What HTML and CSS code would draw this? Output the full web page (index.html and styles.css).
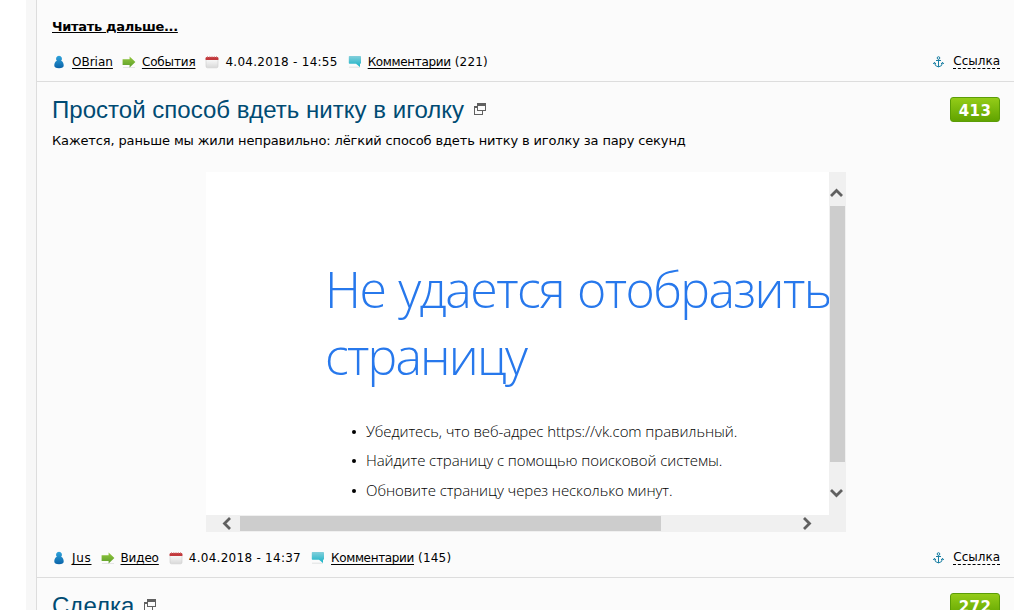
FILE: index.html
```html
<!DOCTYPE html>
<html lang="ru">

<head>
  <meta charset="UTF-8">
  <meta name="viewport" content="width=device-width, initial-scale=1.0">
  <title>Простой способ вдеть нитку в иголку</title>
  <link rel="stylesheet" href="styles.css">
</head>

<body>
  <!-- shared icons -->
  <svg class="sprite" width="0" height="0">
    <defs>
      <linearGradient id="gblue" x1="0" y1="0" x2="0" y2="1">
        <stop offset="0" stop-color="#2fa4dc" />
        <stop offset="1" stop-color="#0b63a8" />
      </linearGradient>
      <linearGradient id="ggreen" x1="0" y1="0" x2="0" y2="1">
        <stop offset="0" stop-color="#93c83d" />
        <stop offset="1" stop-color="#5c9e2a" />
      </linearGradient>
      <linearGradient id="gcyan" x1="0" y1="0" x2="0" y2="1">
        <stop offset="0" stop-color="#84cfdb" />
        <stop offset="1" stop-color="#14b2c6" />
      </linearGradient>
      <linearGradient id="ggrey" x1="0" y1="0" x2="0" y2="1">
        <stop offset="0" stop-color="#ffffff" />
        <stop offset="1" stop-color="#d9d9d9" />
      </linearGradient>
      <symbol id="i-user" viewBox="0 0 14 14">
        <path d="M7 .8a3 3 0 0 1 2.2 5C11 6.600 11.700 8.500 11.700 10.500c0 2-1.600 2.700-4.700 2.700s-4.700-.7-4.700-2.700c0-2 .7-3.900 2.500-4.700A3 3 0 0 1 7 .8z" fill="url(#gblue)" />
      </symbol>
      <symbol id="i-arrow" viewBox="0 0 14 14">
        <path d="M1 12.500h12" stroke="#e4e4e4" />
        <path d="M.6 4.300h7V1.500l5.800 5.500-5.800 5.500V10h-7z" fill="url(#ggreen)" />
      </symbol>
      <symbol id="i-date" viewBox="0 0 14 14">
        <rect x="1" y="3" width="12" height="9.800" rx="1.500" fill="url(#ggrey)" stroke="#cfcfcf" stroke-width=".6" />
        <path d="M.6 5V3.200Q.6 2 2 2h10q1.400 0 1.400 1.200V5z" fill="#c2383c" />
        <path d="M2.500 1v1.500M4.800 1v1.500M7 1v1.500M9.300 1v1.500M11.500 1v1.500" stroke="#d98b8b" stroke-width=".8" />
      </symbol>
      <symbol id="i-talk" viewBox="0 0 14 14">
        <path d="M1 12.200h11" stroke="#dfe3e3" />
        <path d="M1.500 1h10.800q.7 0 .7.700V8q0 .8-.8.800H12v3.200L8 8.800H1.500Q.8 8.800.8 8V1.700Q.8 1 1.500 1z" fill="url(#gcyan)" />
      </symbol>
      <symbol id="i-anchor" viewBox="0 0 12 12">
        <g fill="none" stroke="#1b7fa3">
          <circle cx="5.500" cy="2" r="1.300" />
          <path d="M5.500 3.400v7.600M3 4.500h5M1.500 6.500q0 4 4 4.400 4-.4 4-4.400M.2 8l1.300-1.700L2.900 8M8.100 8l1.400-1.700L10.800 8" />
        </g>
      </symbol>
      <symbol id="i-window" viewBox="0 0 12 12">
        <path d="M3 0h9v8H3zM4 3v4h7V3zM0 3h3v2H1v6h7V8h1v4H0z" fill="#606060" fill-rule="evenodd" />
      </symbol>
    </defs>
  </svg>

  <div class="content">
    <div class="post first">
      <div class="more"><a href="#">Читать дальше...</a></div>
      <div class="meta">
        <svg class="icon"><use href="#i-user" /></svg>
        <a href="#" class="author">OBrian</a>
        <svg class="icon"><use href="#i-arrow" /></svg>
        <a href="#" class="section">События</a>
        <svg class="icon"><use href="#i-date" /></svg>
        <span class="date">4.04.2018 - 14:55</span>
        <svg class="icon"><use href="#i-talk" /></svg>
        <a href="#" class="comments">Комментарии</a><span class="count">(221)</span>
        <svg class="anchor"><use href="#i-anchor" /></svg>
        <a href="#" class="permalink">Ссылка</a>
      </div>
    </div>

    <div class="post">
      <div class="head">
        <h2><a href="#">Простой способ вдеть нитку в иголку</a></h2>
        <svg class="window"><use href="#i-window" /></svg>
        <div class="rating">413</div>
      </div>
      <p class="text">Кажется, раньше мы жили неправильно: лёгкий способ вдеть нитку в иголку за пару секунд</p>
      <div class="frame">
        <div class="page">
          <h1><span>Не удается отобразить</span><br><span class="line2">страницу</span></h1>
          <ul>
            <li>Убедитесь, что веб-адрес https://vk.com правильный.</li>
            <li>Найдите страницу с помощью поисковой системы.</li>
            <li>Обновите страницу через несколько минут.</li>
          </ul>
        </div>
        <div class="vbar">
          <svg class="up" width="13" height="9"><path d="M1 8l5.500-5.500L12 8" /></svg>
          <div class="thumb"></div>
          <svg class="down" width="13" height="9"><path d="M1 1l5.500 5.500L12 1" /></svg>
        </div>
        <div class="hbar">
          <svg width="10" height="13"><path d="M9 1L3.500 6.500 9 12" /></svg>
          <div class="thumb"></div>
          <svg class="right" width="10" height="13"><path d="M2 1l5.500 5.500L2 12" /></svg>
        </div>
      </div>
      <div class="meta">
        <svg class="icon"><use href="#i-user" /></svg>
        <a href="#" class="author short">Jus</a>
        <svg class="icon"><use href="#i-arrow" /></svg>
        <a href="#" class="section">Видео</a>
        <svg class="icon"><use href="#i-date" /></svg>
        <span class="date">4.04.2018 - 14:37</span>
        <svg class="icon"><use href="#i-talk" /></svg>
        <a href="#" class="comments">Комментарии</a><span class="count">(145)</span>
        <svg class="anchor"><use href="#i-anchor" /></svg>
        <a href="#" class="permalink">Ссылка</a>
      </div>
    </div>

    <div class="post">
      <div class="head">
        <h2><a href="#">Сделка</a></h2>
        <svg class="window"><use href="#i-window" /></svg>
        <div class="rating">272</div>
      </div>
    </div>
  </div>
</body>

</html>
```

FILE: styles.css
```css
* {
  margin: 0;
  padding: 0;
  box-sizing: border-box;
}

body {
  height: 610px;
  overflow: hidden;
  background: #fff;
  color: #000;
  font-family: Verdana, "DejaVu Sans", sans-serif;
  font-size: 13px;
}

a {
  color: #000;
}

.sprite {
  display: block;
}

.content {
  height: 610px;
  overflow: hidden;
  margin-left: 26px;
  border-left: 10px solid #f7f7f7;
  background: #fbfbfb;
}

.post {
  height: 496px;
  padding: 15px 14px 0 15px;
  border-left: 1px solid #ddd;
  border-top: 1px solid #ddd;
}

.first {
  height: 81px;
  border-top: none;
}

.more {
  height: 38px;
  line-height: 23px;
  font-weight: bold;
}

.more a {
  letter-spacing: -0.3px;
}

/* post info line */
.meta {
  display: flex;
  align-items: center;
  height: 18px;
  font-size: 12px;
  line-height: 18px;
  white-space: nowrap;
}

.meta a {
  text-underline-offset: 2px;
}

.icon {
  flex: none;
  width: 14px;
  height: 14px;
  margin-right: 6px;
}

.author {
  margin-right: 9px;
}

.short {
  letter-spacing: 0.7px;
}

.section {
  margin-right: 10px;
  letter-spacing: -0.15px;
}

.date {
  margin-right: 10px;
  letter-spacing: 0.27px;
}

.comments {
  letter-spacing: -0.34px;
}

.count {
  margin-left: 4px;
  letter-spacing: 0.2px;
}

.anchor {
  width: 12px;
  height: 12px;
  margin-left: auto;
  margin-right: 8px;
}

.meta .permalink {
  text-decoration: none;
  line-height: 13px;
  border-bottom: 1px dashed #000;
}

.head {
  display: flex;
  height: 35px;
}

h2 {
  font: 24px/26px Arial, "Liberation Sans", sans-serif;
  letter-spacing: 0.02px;
}

h2 a {
  color: #004b73;
  text-decoration: none;
}

.window {
  width: 12px;
  height: 12px;
  margin: 6px 0 0 10px;
}

.rating {
  width: 50px;
  height: 25px;
  margin-left: auto;
  border: 1px solid #5b9d07;
  border-radius: 3px;
  background: linear-gradient(#94cc18, #7ab80c 50%, #61a300);
  color: #fff;
  font-size: 15px;
  font-weight: bold;
  line-height: 26px;
  letter-spacing: 0.4px;
  text-align: center;
}

.text {
  height: 40px;
  line-height: 17px;
  letter-spacing: -0.138px;
  white-space: nowrap;
}

/* embedded video that failed to load */
.frame {
  display: grid;
  grid-template-columns: 623px 17px;
  grid-template-rows: 343px 17px;
  width: 640px;
  margin: 0 auto 17px;
  background: #f0f0f0;
}

.page {
  padding: 84px 0 0 119px;
  overflow: hidden;
  background: #fff;
  font-family: "Segoe UI Light", "Open Sans", sans-serif;
  font-weight: 300;
  white-space: nowrap;
}

h1 {
  margin-bottom: 27px;
  color: #2778ec;
  font-size: 50px;
  font-weight: 300;
  line-height: 67px;
  letter-spacing: -1.55px;
  word-spacing: 1.4px;
}

.line2 {
  letter-spacing: -1.8px;
}

ul {
  padding-left: 26px;
  font-size: 15px;
  list-style: none;
}

li {
  display: flex;
  height: 29.3px;
  line-height: 29px;
  letter-spacing: -0.08px;
}

li::before {
  content: "";
  width: 4px;
  height: 4px;
  margin: 13px 10px 0 1px;
  border-radius: 50%;
  background: #000;
}

.vbar {
  display: flex;
  flex-direction: column;
  align-items: center;
  padding-top: 16px;
}

.vbar svg {
  margin-right: 2px;
}

.vbar .thumb {
  width: 15px;
  height: 256px;
  margin: 9px 0 27px;
}

.hbar {
  display: flex;
  align-items: center;
  padding-left: 15px;
}

.hbar .thumb {
  width: 421px;
  height: 15px;
  margin: 0 141px 0 9px;
}

.thumb {
  flex: none;
  background: #cdcdcd;
}

.vbar svg,
.hbar svg {
  flex: none;
  fill: none;
  stroke: #606060;
  stroke-width: 2.8;
}
```
